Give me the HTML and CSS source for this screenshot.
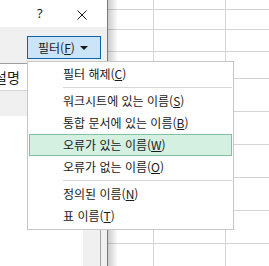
FILE: index.html
```html
<!DOCTYPE html>
<html lang="ko">
<head>
    <meta charset="UTF-8">
    <title>이름 관리자 - 필터</title>
    <link rel="stylesheet" href="styles.css">
</head>
<body>
    <div class="screen">
        <div class="dialog">
            <div class="titlebar">
                <span class="help">?</span>
                <svg class="close" width="10" height="10" viewBox="0 0 10 10">
                    <path d="M0.5 0.5 L9.5 9.5 M9.5 0.5 L0.5 9.5" stroke="#1a1a1a" stroke-width="1" fill="none"/>
                </svg>
            </div>
            <div class="dialog-body">
                <div class="toolbar">
                    <button class="filter-btn">필터(<u>F</u>)<span class="arrow"></span></button>
                </div>
                <div class="list">
                    <div class="list-main">
                        <div class="list-head"><span>설명</span></div>
                        <div class="list-band"></div>
                        <div class="list-rows"></div>
                    </div>
                    <div class="list-scroll"></div>
                </div>
            </div>
        </div>

        <div class="sheet">
            <div class="row r1"><div class="cell c1"></div><div class="cell c2"></div><div class="cell c3"></div></div>
            <div class="row r2"><div class="cell c1"></div><div class="cell c2"></div><div class="cell c3"></div></div>
            <div class="row r3"><div class="cell c1"></div><div class="cell c2"></div><div class="cell c3"></div></div>
            <div class="row r4"><div class="cell c1"></div><div class="cell c2"></div><div class="cell c3"></div></div>
            <div class="row r5"><div class="cell c1"></div><div class="cell c2"></div><div class="cell c3"></div></div>
            <div class="row r5"><div class="cell c1"></div><div class="cell c2"></div><div class="cell c3"></div></div>
            <div class="row r5"><div class="cell c1"></div><div class="cell c2"></div><div class="cell c3"></div></div>
            <div class="row r5"><div class="cell c1"></div><div class="cell c2"></div><div class="cell c3"></div></div>
            <div class="row r5"><div class="cell c1"></div><div class="cell c2"></div><div class="cell c3"></div></div>
            <div class="row r5"><div class="cell c1"></div><div class="cell c2"></div><div class="cell c3"></div></div>
        </div>

        <div class="menu">
            <div class="item">필터 해제(<u>C</u>)</div>
            <div class="sep"></div>
            <div class="item">워크시트에 있는 이름(<u>S</u>)</div>
            <div class="item">통합 문서에 있는 이름(<u>B</u>)</div>
            <div class="item active">오류가 있는 이름(<u>W</u>)</div>
            <div class="item">오류가 없는 이름(<u>O</u>)</div>
            <div class="sep"></div>
            <div class="item">정의된 이름(<u>N</u>)</div>
            <div class="item">표 이름(<u>T</u>)</div>
        </div>
    </div>
</body>
</html>
```

FILE: styles.css
```css
body {
    margin: 0;
    font-family: "Noto Sans CJK KR", "Noto Sans", sans-serif;
    font-size: 12px;
    color: #1a1a1a;
    background-color: #ffffff;
}

.screen {
    position: relative;
    display: flex;
    width: 269px;
    height: 266px;
    overflow: hidden;
}

/* dialog on the left */

.dialog {
    display: flex;
    flex-direction: column;
    width: 107px;
    border-right: 1px solid #7a7a7a;
    background-color: #f0f0f0;
}

.titlebar {
    display: flex;
    align-items: center;
    height: 27px;
    background-color: #ffffff;
}

.help {
    margin-left: 37px;
    font-family: "Noto Sans", sans-serif;
    font-size: 13px;
    line-height: 13px;
}

.close {
    margin-left: 34px;
    margin-top: 2px;
}

.dialog-body {
    flex: 1;
    display: flex;
    flex-direction: column;
}

.toolbar {
    height: 36px;
    padding-left: 27px;
    padding-top: 9px;
    box-sizing: border-box;
}

.filter-btn {
    display: flex;
    align-items: center;
    width: 74px;
    height: 23px;
    padding: 0 0 0 10px;
    border: 1px solid #0a64ad;
    background-color: #cce4f7;
    font-family: inherit;
    font-size: 12px;
    color: #1a1a1a;
}

.arrow {
    width: 0;
    height: 0;
    margin-left: 5px;
    border-left: 4px solid transparent;
    border-right: 4px solid transparent;
    border-top: 4px solid #1a1a1a;
}

.list {
    flex: 1;
    display: flex;
    width: 101px;
    border-top: 1px solid #a0a0a0;
    border-right: 1px solid #a0a0a0;
    box-sizing: border-box;
}

.list-main {
    flex: 1;
    display: flex;
    flex-direction: column;
    background-color: #ffffff;
    overflow: hidden;
}

.list-head {
    height: 26px;
    line-height: 26px;
    border-bottom: 1px solid #d5d5d5;
    white-space: nowrap;
    font-size: 14px;
}

.list-head span {
    margin-left: -6px;
}

.list-band {
    height: 25px;
    background-color: #f0f0f0;
}

.list-rows {
    flex: 1;
}

.list-scroll {
    width: 17px;
    background-color: #f0f0f0;
}

/* worksheet behind */

.sheet {
    position: relative;
    flex: 1;
    display: flex;
    flex-direction: column;
}

.sheet::before {
    content: "";
    position: absolute;
    left: 0;
    top: 0;
    bottom: 0;
    width: 10px;
    background: linear-gradient(to right, rgba(0, 0, 0, 0.2), rgba(0, 0, 0, 0));
}

.row {
    display: flex;
    box-sizing: border-box;
    flex-shrink: 0;
}

.r1 { height: 10px; }
.r2 { height: 20px; }
.r3 { height: 22px; }
.r4 { height: 27px; }
.r5 { height: 33px; }

.cell {
    border-bottom: 1px solid #d4d4d4;
    border-right: 1px solid #d4d4d4;
    box-sizing: border-box;
}

.c1 { width: 46px; }
.c2 { width: 72px; }
.c3 { flex: 1; border-right: none; }

/* dropdown menu */

.menu {
    position: absolute;
    left: 27px;
    top: 61px;
    width: 207px;
    height: 169px;
    box-sizing: border-box;
    padding: 1px 1px;
    border: 1px solid #c6c6c6;
    background-color: #ffffff;
}

.item {
    height: 22px;
    line-height: 22px;
    padding-left: 34px;
    box-sizing: border-box;
    white-space: nowrap;
}

.item.active {
    background-color: #d3f0e0;
    border: 1px solid #86bfa0;
    line-height: 20px;
    padding-left: 33px;
}

.sep {
    height: 1px;
    margin: 2px 0 2px 34px;
    background-color: #d7d7d7;
}
```
